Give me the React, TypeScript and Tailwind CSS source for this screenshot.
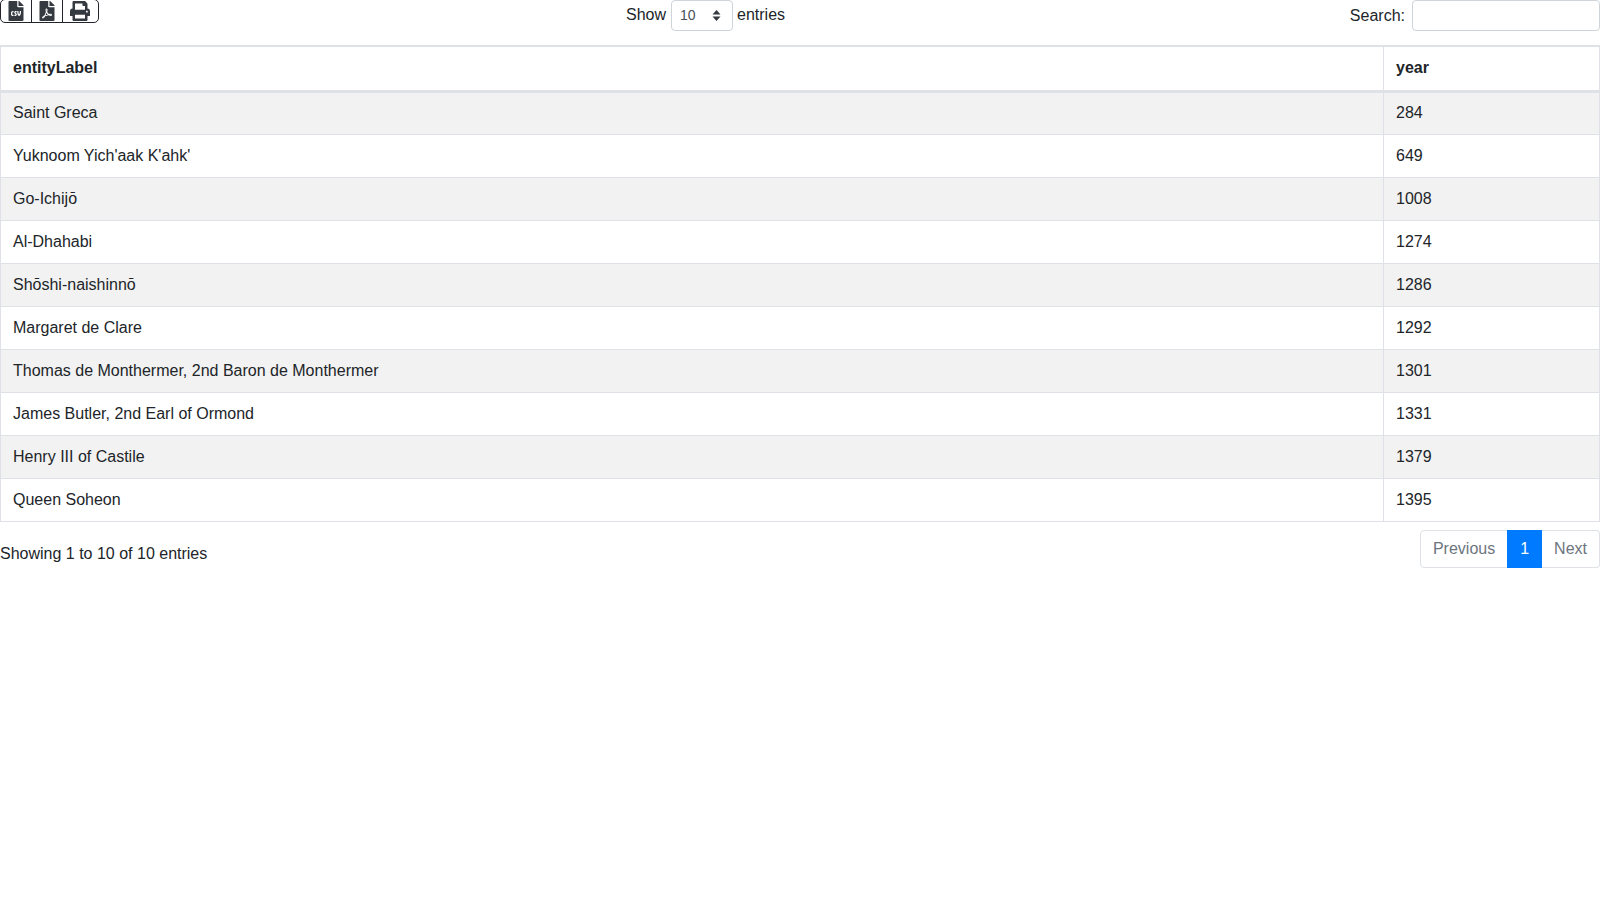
import React from "react";
import { FaFileCsv, FaFilePdf, FaPrint } from "react-icons/fa";

const rows = [
  ["Saint Greca", "284"],
  ["Yuknoom Yich'aak K'ahk'", "649"],
  ["Go-Ichijō", "1008"],
  ["Al-Dhahabi", "1274"],
  ["Shōshi-naishinnō", "1286"],
  ["Margaret de Clare", "1292"],
  ["Thomas de Monthermer, 2nd Baron de Monthermer", "1301"],
  ["James Butler, 2nd Earl of Ormond", "1331"],
  ["Henry III of Castile", "1379"],
  ["Queen Soheon", "1395"],
];

export default function App() {
  return (
    <div className="font-['Liberation_Sans',Arial,sans-serif] text-base leading-6 text-[#212529] bg-white min-h-[900px]">
      {/* toolbar */}
      <div className="flex items-start h-[45px]">
        <div className="w-[626px] shrink-0">
          {/* top border sits just off the page in the original */}
          <div className="flex -mt-px h-[24px] w-[99px] border border-[#212529] rounded-[5px] overflow-hidden">
            <div className="w-[31px] flex items-center justify-center border-r border-[#212529]">
              <FaFileCsv className="text-[#343a40] text-[20px]" />
            </div>
            <div className="w-[31px] flex items-center justify-center border-r border-[#212529]">
              <FaFilePdf className="text-[#343a40] text-[20px]" />
            </div>
            <div className="flex-1 flex items-center justify-center pr-[2px]">
              <FaPrint className="text-[#343a40] text-[20px]" />
            </div>
          </div>
        </div>
        <div className="flex items-start">
          <span className="mt-[3px]">Show</span>
          <div className="ml-[5px] w-[62px] h-[31px] border border-[#ced4da] rounded-[4px] flex items-center justify-between pl-2 pr-[11px] text-sm text-[#495057]">
            <span className="-mt-px">10</span>
            <svg width="9" height="13" viewBox="0 0 9 13" className="text-[#343a40]">
              <path d="M4.5 1 L8.5 5.5 H0.5 Z M4.5 12 L0.5 7.5 H8.5 Z" fill="currentColor" />
            </svg>
          </div>
          <span className="ml-[4px] mt-[3px]">entries</span>
        </div>
        <div className="ml-auto flex items-start">
          <span className="mt-[4px]">Search:</span>
          <input className="ml-[7px] w-[188px] h-[31px] border border-[#ced4da] rounded-[4px] bg-white outline-none" />
        </div>
      </div>

      {/* table */}
      <table className="w-full border-collapse table-fixed">
        <thead>
          <tr className="h-[45px]">
            <th className="w-[1383px] border border-b-[3px] border-[#dee2e6] border-t-2 px-3 text-left font-bold">entityLabel</th>
            <th className="border border-b-[3px] border-[#dee2e6] border-t-2 px-3 text-left font-bold">year</th>
          </tr>
        </thead>
        <tbody>
          {rows.map((r, i) => (
            <tr key={r[1]} className={"h-[43px] " + (i % 2 === 0 ? "bg-[#f2f2f2]" : "bg-white")}>
              <td className="border border-[#dee2e6] px-3 py-0">{r[0]}</td>
              <td className="border border-[#dee2e6] px-3 py-0">{r[1]}</td>
            </tr>
          ))}
        </tbody>
      </table>

      {/* footer */}
      <div className="flex items-start justify-between mt-2">
        <div className="pt-[12px]">Showing 1 to 10 of 10 entries</div>
        <div className="flex h-[38px]">
          <div className="px-3 flex items-center border border-[#dee2e6] rounded-l-[4px] text-[#6c757d]">Previous</div>
          <div className="px-[13px] -ml-px flex items-center bg-[#007bff] text-white">1</div>
          <div className="px-3 flex items-center border border-l-0 border-[#dee2e6] rounded-r-[4px] text-[#6c757d]">Next</div>
        </div>
      </div>
    </div>
  );
}
